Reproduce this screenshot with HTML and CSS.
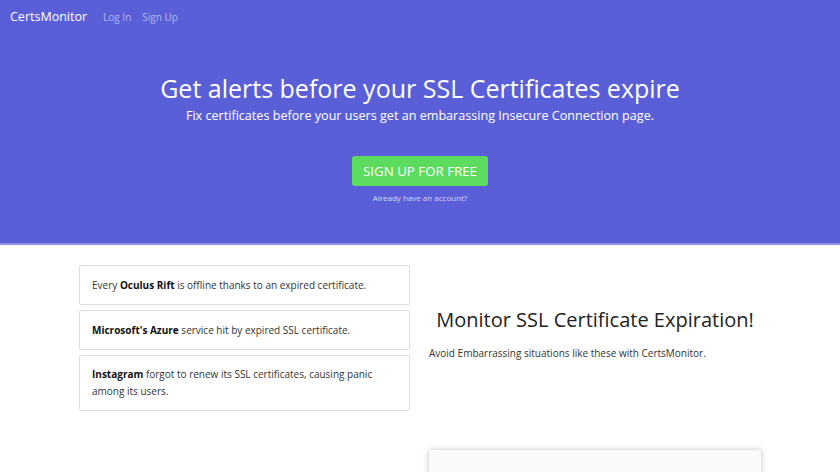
FILE: index.html
```html
<!DOCTYPE html>
<html>
<head>
<meta charset="utf-8">
<link rel="stylesheet" href="styles.css">
</head>
<body>
<header class="hero">
  <nav class="nav">
    <a class="brand" href="#">CertsMonitor</a>
    <a class="nav-link" href="#">Log In</a>
    <a class="nav-link" href="#">Sign Up</a>
  </nav>
  <div class="hero-body">
    <h1 class="hero-title">Get alerts before your SSL Certificates expire</h1>
    <p class="hero-sub">Fix certificates before your users get an embarassing Insecure Connection page.</p>
    <a class="cta" href="#">SIGN UP FOR FREE</a>
    <a class="already" href="#">Already have an account?</a>
  </div>
</header>
<main class="content">
  <div class="news">
    <div class="news-card"><p class="news-text">Every <b>Oculus Rift</b> is offline thanks to an expired certificate.</p></div>
    <div class="news-card"><p class="news-text"><b>Microsoft's Azure</b> service hit by expired SSL certificate.</p></div>
    <div class="news-card tall"><p class="news-text"><b>Instagram</b> forgot to renew its SSL certificates, causing panic among its users.</p></div>
  </div>
  <div class="pitch">
    <h2 class="pitch-title">Monitor SSL Certificate Expiration!</h2>
    <p class="pitch-text">Avoid Embarrassing situations like these with CertsMonitor.</p>
    <div class="preview"></div>
  </div>
</main>
</body>
</html>
```
FILE: styles.css
```css
* { box-sizing: border-box; }
body {
  margin: 0;
  font-family: "Open Sans", "DejaVu Sans", sans-serif;
  color: #222;
  background: #fff;
  height: 472px;
  overflow: hidden;
}
a { text-decoration: none; }
.hero {
  background: #5a5fd8;
  border-bottom: 2px solid #8b8fe6;
  height: 245px;
}
.nav {
  display: flex;
  align-items: baseline;
  padding: 8px 10px 0;
  height: 40px;
}
.brand {
  color: #fff;
  font-size: 12.5px;
  margin-right: 16px;
}
.nav-link {
  color: #b4b7f0;
  font-size: 10px;
  margin-right: 11px;
}
.hero-body {
  display: flex;
  flex-direction: column;
  align-items: center;
  padding-top: 30px;
}
.hero-title {
  margin: 0;
  color: #fff;
  font-weight: 400;
  font-size: 25px;
  line-height: 36px;
}
.hero-sub {
  margin: 0;
  color: #fff;
  font-size: 12.6px;
  line-height: 20px;
}
.cta {
  margin-top: 30px;
  background: #5cdc5e;
  color: #fff;
  font-size: 13.3px;
  line-height: 30px;
  padding: 0 11px;
  border-radius: 3px;
}
.already {
  margin-top: 6px;
  color: #d8daf8;
  font-size: 8px;
}
.content {
  display: flex;
  gap: 19px;
  width: 682px;
  margin: 20px auto 0;
}
.news {
  flex: 0 0 331px;
  display: flex;
  flex-direction: column;
  gap: 5px;
}
.news-card {
  display: flex;
  align-items: center;
  border: 1px solid #ddd;
  border-radius: 2px;
  padding: 0 12px;
  height: 40px;
}
.news-text {
  margin: 0;
  font-size: 10px;
  line-height: 17px;
  color: #333;
}
.news-text b { font-weight: 700; color: #111; }
.news-card.tall { height: 56px; }
.pitch {
  flex: 1;
  padding-top: 41px;
}
.pitch-title {
  margin: 0;
  text-align: center;
  font-weight: 400;
  font-size: 20px;
  line-height: 28px;
  white-space: nowrap;
  color: #222;
}
.pitch-text {
  margin: 12px 0 0;
  font-size: 10px;
  color: #333;
}
.preview {
  margin-top: 90px;
  height: 60px;
  background: #f9f9f9;
  box-shadow: 0 0 6px rgba(0,0,0,0.25);
}
```
